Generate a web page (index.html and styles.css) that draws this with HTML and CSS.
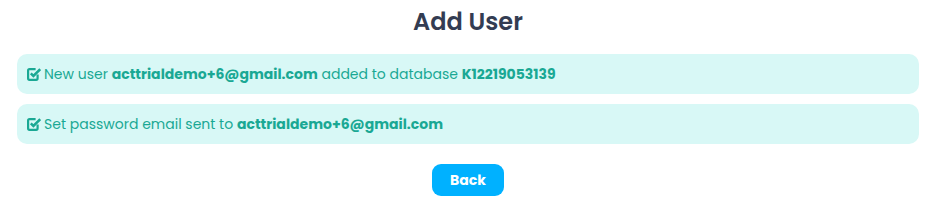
FILE: index.html
```html
<!DOCTYPE html>
<html lang="en">
<head>
  <meta charset="UTF-8" />
  <meta name="viewport" content="width=device-width, initial-scale=1.0" />
  <title>Add User</title>
  <link rel="stylesheet" href="styles.css">
</head>
<body>
  <div class="container">
    <h2 class="title">Add User</h2>
    <div class="alert">
      <svg class="check" viewBox="0 0 14 14" width="14" height="14">
        <path d="M10.6 7.6 V11.3 Q10.6 12.8 9.2 12.8 H2.5 Q1.1 12.8 1.1 11.3 V3.6 Q1.1 2.1 2.5 2.1 H8.6" fill="none" stroke="currentColor" stroke-width="2.2"/>
        <path d="M3.8 6.4 L6.4 9 L13.2 2.2" fill="none" stroke="currentColor" stroke-width="2.5"/>
      </svg>
      <span>New user <b>acttrialdemo+6@gmail.com</b> added to database <b>K12219053139</b></span>
    </div>
    <div class="alert">
      <svg class="check" viewBox="0 0 14 14" width="14" height="14">
        <path d="M10.6 7.6 V11.3 Q10.6 12.8 9.2 12.8 H2.5 Q1.1 12.8 1.1 11.3 V3.6 Q1.1 2.1 2.5 2.1 H8.6" fill="none" stroke="currentColor" stroke-width="2.2"/>
        <path d="M3.8 6.4 L6.4 9 L13.2 2.2" fill="none" stroke="currentColor" stroke-width="2.5"/>
      </svg>
      <span>Set password email sent to <b>acttrialdemo+6@gmail.com</b></span>
    </div>
    <div class="actions">
      <button class="back">Back</button>
    </div>
  </div>
</body>
</html>
```

FILE: styles.css
```css
* {
  margin: 0;
  padding: 0;
  box-sizing: border-box;
}
body {
  background-color: #ffffff;
  font-family: "Poppins", "Open Sans", "Noto Sans", sans-serif;
}
.container {
  padding: 8px 18px 0 17px;
}
.title {
  text-align: center;
  font-size: 24px;
  font-weight: 600;
  color: #333c52;
  line-height: 28px;
  margin-bottom: 18px;
}
.alert {
  display: flex;
  align-items: center;
  gap: 3px;
  height: 40px;
  padding: 0 10px;
  margin-bottom: 10px;
  background-color: #d8f8f6;
  border-radius: 10px;
  color: #1aa894;
  font-size: 14px;
}
.alert b {
  font-weight: 700;
}
.check {
  flex: none;
}
.actions {
  display: flex;
  justify-content: center;
  padding-top: 10px;
}
.back {
  width: 72px;
  height: 32px;
  border: none;
  border-radius: 9px;
  background-color: #00b1ff;
  color: #ffffff;
  font-family: "Poppins", "Open Sans", "Noto Sans", sans-serif;
  font-size: 14px;
  font-weight: 700;
  cursor: pointer;
}
```
